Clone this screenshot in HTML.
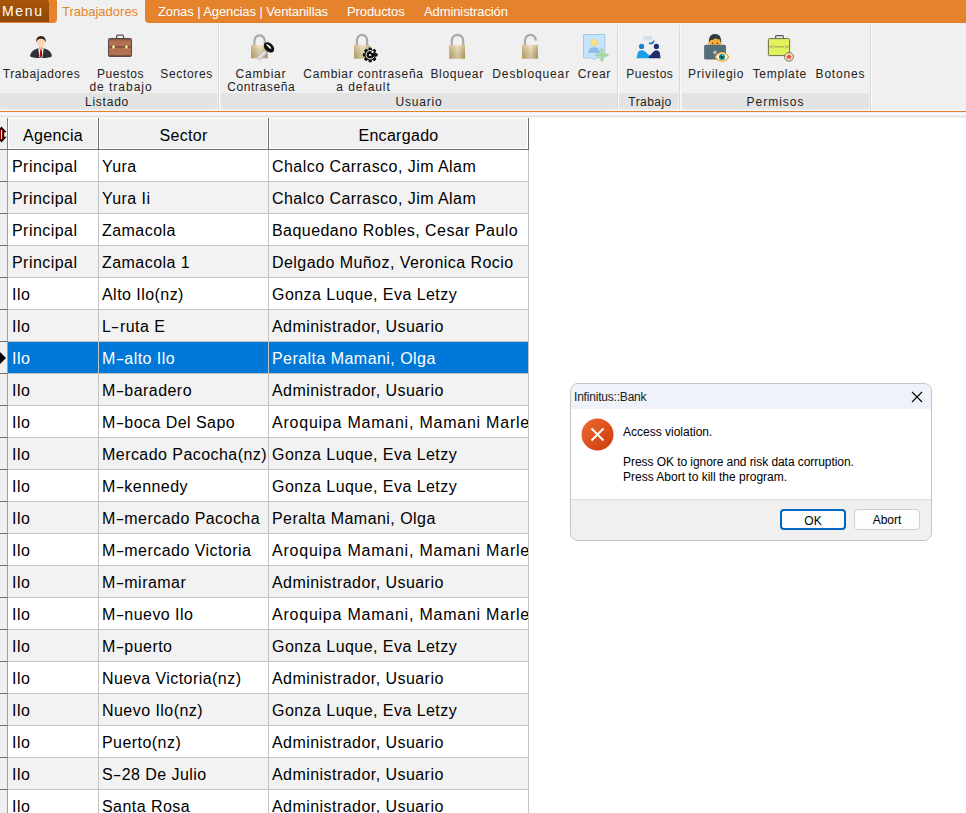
<!DOCTYPE html><html><head><meta charset="utf-8"><style>*{margin:0;padding:0;box-sizing:border-box}
html,body{width:966px;height:813px;overflow:hidden;background:#fff;font-family:"Liberation Sans",sans-serif;position:relative}
.topbar{position:absolute;top:0;height:23px;background:#e5832d}
.ribbon{position:absolute;left:0;top:22px;width:966px;height:89px;background:#f0f0f0}
.menu{position:absolute;left:0;top:0;width:49px;height:22px;background:linear-gradient(#a9560b,#8f4604);color:#fff;font-size:14px;line-height:22px;padding-left:2px;letter-spacing:1.7px;border-top-right-radius:3px}
.notch{position:absolute;top:22px;width:4px;height:4px;background:#e5832d}
.tab{position:absolute;top:0;height:23px;color:#fff;font-size:13px;line-height:23px;letter-spacing:-0.1px;white-space:nowrap}
.tab.act{background:#f0f0f0;color:#e5832d;border-radius:4px 4px 0 0;letter-spacing:0;height:24px}
.orline{position:absolute;left:0;top:111px;width:966px;height:1px;background:#e5832d}
.below{position:absolute;left:0;top:109px;width:966px;height:9px;background:linear-gradient(#eef3fa 0,#eef3fa 2px,transparent 2px,transparent 3px,#eef3fa 3px,#eef3fa 5px,#fff 5px,#fff 6px,#e8e8e8 6px,#e8e8e8 8px,#f0f0f0 8px)}
.glabel{position:absolute;top:93px;height:16px;background:#e3e3e3;color:#222;font-size:12px;line-height:18px;text-align:center;letter-spacing:0.45px;border-radius:0 0 3px 3px}
.sep{position:absolute;top:25px;width:1px;height:85px;background:#d9d9d9;box-shadow:1px 0 0 #fafafa}
.bt{position:absolute;font-size:12px;color:#222;line-height:13px;white-space:nowrap;letter-spacing:0.45px}
.grid{position:absolute;left:0;top:118px;width:529px;height:695px;background:#fff}
.hind{position:absolute;left:0;top:0;width:8px;height:32px;background:#f0f0f0;border-right:1px solid #808080;border-bottom:1px solid #6e6e6e;box-shadow:inset 0 1px 0 #fff}
.rsz{position:absolute;left:0;top:0}
.hc{position:absolute;top:0;height:32px;background:#f0f0f0;border-right:1px solid #6e6e6e;border-bottom:1px solid #6e6e6e;box-shadow:inset 1px 1px 0 #fff,inset -1px -1px 0 #fff;font-size:16px;line-height:36px;text-align:center;color:#000;letter-spacing:0.3px}
.c1{left:8px;width:91px}
.c2{left:99px;width:170px}
.c3{left:269px;width:260px}
.row{position:absolute;left:0;width:529px;height:32px;background:#fff}
.row.alt{background:#f2f2f2}
.ind{position:absolute;left:0;top:0;width:8px;height:32px;background:#f0f0f0;border-right:1px solid #a0a0a0;border-bottom:1px solid #6e6e6e}
.cell{position:absolute;top:0;height:32px;border-right:1px solid #c3c3c3;border-bottom:1px solid #c3c3c3;font-size:16px;line-height:33px;padding-left:3px;white-space:nowrap;overflow:hidden;color:#000;letter-spacing:0.45px}
.row .c1{padding-left:4px}
.row.sel .cell{background:#0078d7;color:#fff;border-bottom-color:#c3c3c3}
.arr{position:absolute;left:0;top:10px;width:0;height:0;border-top:6px solid transparent;border-bottom:6px solid transparent;border-left:6px solid #000}
.dlg{position:absolute;left:570px;top:383px;width:362px;height:158px;border:1px solid #c4c4c4;border-radius:8px;background:#fff;overflow:hidden;font-size:12px;color:#000;box-shadow:0 0 1px rgba(0,0,0,0.05)}
.dlg .title{position:absolute;left:0;top:0;width:100%;height:25px;background:#eff2f8;font-size:12px;line-height:26px;padding-left:3px;letter-spacing:-0.2px;color:#1a1a1a}
.dlg .msg{position:absolute;left:52px;font-size:12px;line-height:15px;letter-spacing:0px;white-space:nowrap;color:#000}
.dlg .foot{position:absolute;left:0;top:115px;width:100%;height:43px;background:#f0f0f0;border-top:1px solid #dfdfdf}
.dbtn{position:absolute;top:125px;height:21px;width:66px;border-radius:4px;background:#fdfdfd;font-size:12px;line-height:21px;text-align:center;color:#000}

.hy{display:inline-block;transform:scaleX(1.6);padding:0 1.4px}
</style></head><body>
<div class="ribbon"></div>
<div class="topbar" style="left:0;width:57px;border-bottom-right-radius:4px"></div><div class="topbar" style="left:145px;width:821px;border-bottom-left-radius:4px"></div>
<div class="menu">Menu</div>
<div class="tab act" style="left:57px;width:88px;padding-left:5px">Trabajadores</div>
<div class="tab" style="left:158px">Zonas | Agencias | Ventanillas</div>
<div class="tab" style="left:347px">Productos</div>
<div class="tab" style="left:424px">Administración</div>
<div class="below"></div>
<div class="orline"></div>
<div class="glabel" style="left:0;width:217px;padding-right:3px;letter-spacing:0.78px">Listado</div>
<div class="glabel" style="left:221px;width:396px;letter-spacing:0.8px">Usuario</div>
<div class="glabel" style="left:618px;width:60px;padding-left:4px">Trabajo</div>
<div class="glabel" style="left:682px;width:187px;letter-spacing:1px">Permisos</div>
<div class="sep" style="left:218px"></div>
<div class="sep" style="left:617px"></div>
<div class="sep" style="left:679px"></div>
<div class="sep" style="left:870px"></div>
<div class="bt" style="left:2.7px;top:68px;letter-spacing:0.62px">Trabajadores</div>
<div class="bt" style="left:97.0px;top:68px;letter-spacing:0.52px">Puestos</div>
<div class="bt" style="left:89.4px;top:81px;letter-spacing:0.99px">de trabajo</div>
<div class="bt" style="left:160.3px;top:68px;letter-spacing:0.65px">Sectores</div>
<div class="bt" style="left:235.6px;top:68px;letter-spacing:0.77px">Cambiar</div>
<div class="bt" style="left:227.2px;top:81px;letter-spacing:0.61px">Contraseña</div>
<div class="bt" style="left:303.3px;top:68px;letter-spacing:0.68px">Cambiar contraseña</div>
<div class="bt" style="left:336.3px;top:81px;letter-spacing:0.93px">a default</div>
<div class="bt" style="left:430.4px;top:68px;letter-spacing:0.68px">Bloquear</div>
<div class="bt" style="left:492.3px;top:68px;letter-spacing:0.88px">Desbloquear</div>
<div class="bt" style="left:577.8px;top:68px;letter-spacing:0.63px">Crear</div>
<div class="bt" style="left:626.3px;top:68px;letter-spacing:0.53px">Puestos</div>
<div class="bt" style="left:688.0px;top:68px;letter-spacing:0.75px">Privilegio</div>
<div class="bt" style="left:752.7px;top:68px;letter-spacing:0.68px">Template</div>
<div class="bt" style="left:815.6px;top:68px;letter-spacing:0.80px">Botones</div>
<svg style="position:absolute;left:0;top:0" width="966" height="112" viewBox="0 0 966 112">
<defs>
<linearGradient id="gold" x1="0" y1="0" x2="1" y2="0"><stop offset="0" stop-color="#c8ad72"/><stop offset="0.55" stop-color="#f1e2b5"/><stop offset="1" stop-color="#bfa266"/></linearGradient>
<linearGradient id="goldv" x1="0" y1="0" x2="0" y2="1"><stop offset="0" stop-color="#fff" stop-opacity="0.25"/><stop offset="1" stop-color="#000" stop-opacity="0.12"/></linearGradient>
</defs>
<!-- person -->
<path d="M30 56 Q30.5 50.5 37.5 48.5 L44.5 48.5 Q51.5 50.5 52 56 Q51 58 41 58 Q31 58 30 56 Z" fill="#2e3137"/>
<path d="M38.3 48.5 L43.7 48.5 L42.6 57.5 L39.4 57.5 Z" fill="#eef2f2"/>
<path d="M40.3 49.2 L41.7 49.2 L42.3 56 L41 57.6 L39.7 56 Z" fill="#c4000f"/>
<path d="M38.8 46 L43.2 46 L43 48.8 L41 50 L39 48.8 Z" fill="#e3b48e"/>
<ellipse cx="41" cy="42.3" rx="4.1" ry="5.3" fill="#f7d6b8"/>
<path d="M36.4 42.5 Q35.6 36 41 36 Q46.4 36 45.6 42.5 Q45 39 41 38.8 Q37 39 36.4 42.5 Z" fill="#3b2314"/>
<!-- briefcase -->
<path d="M116.6 38.5 V36.2 Q116.6 35.1 117.7 35.1 H122.4 Q123.5 35.1 123.5 36.2 V38.5" fill="none" stroke="#555" stroke-width="1.3"/>
<rect x="108.5" y="38.5" width="23" height="18" rx="1" fill="#b27050" stroke="#5b4646" stroke-width="1"/>
<rect x="109" y="39" width="22" height="1.5" fill="#8a5a44"/>
<rect x="109" y="46.2" width="22" height="1.6" fill="#7d5040"/>
<rect x="109" y="55" width="22" height="1.2" fill="#7d5040"/>
<ellipse cx="113.5" cy="47" rx="1.3" ry="1.8" fill="#f4f0a0"/>
<ellipse cx="126.4" cy="47" rx="1.3" ry="1.8" fill="#f4f0a0"/>
<!-- lock + key -->
<path d="M254.4 45.5 V41 A5.2 5.6 0 0 1 264.8 41 V45.5" fill="none" stroke="#a9a9a9" stroke-width="2.2"/>
<rect x="251" y="45" width="16.6" height="13.3" fill="url(#gold)"/>
<rect x="251" y="45" width="16.6" height="13.3" fill="url(#goldv)"/>
<path d="M265.8 51.2 L258 59.2" stroke="#bdbdbd" stroke-width="4.6"/>
<path d="M265 52 L258.4 58.6" stroke="#e4e4e4" stroke-width="2.6"/>
<ellipse cx="269" cy="47.4" rx="6" ry="4.2" transform="rotate(45 269 47.4)" fill="#111"/>
<ellipse cx="268.8" cy="46.4" rx="3.4" ry="0.8" transform="rotate(45 268.8 46.4)" fill="#fff"/>
<!-- lock + gear -->
<path d="M356.9 45.5 V40.5 A5.1 5.6 0 0 1 367.1 40.5 V45.5" fill="none" stroke="#a9a9a9" stroke-width="2.2"/>
<rect x="354" y="45" width="16" height="13.8" fill="url(#gold)"/>
<rect x="354" y="45" width="16" height="13.8" fill="url(#goldv)"/>
<g transform="translate(370.2 54.9)">
<circle r="5.7" fill="#111"/>
<g fill="#111"><rect x="-1.6" y="-7.4" width="3.2" height="3.4" rx="0.9"/><rect x="-1.6" y="-7.4" width="3.2" height="3.4" rx="0.9" transform="rotate(45)"/><rect x="-1.6" y="-7.4" width="3.2" height="3.4" rx="0.9" transform="rotate(90)"/><rect x="-1.6" y="-7.4" width="3.2" height="3.4" rx="0.9" transform="rotate(135)"/><rect x="-1.6" y="-7.4" width="3.2" height="3.4" rx="0.9" transform="rotate(180)"/><rect x="-1.6" y="-7.4" width="3.2" height="3.4" rx="0.9" transform="rotate(225)"/><rect x="-1.6" y="-7.4" width="3.2" height="3.4" rx="0.9" transform="rotate(270)"/><rect x="-1.6" y="-7.4" width="3.2" height="3.4" rx="0.9" transform="rotate(315)"/></g>
<path d="M0.8 -4.2 A4.2 4.2 0 1 0 3.9 1.8" fill="none" stroke="#fff" stroke-width="1"/>
<path d="M1.2 -4.8 L4.3 -3 L1.5 -1.7 Z" fill="#fff"/>
<rect x="-1.2" y="-0.6" width="2.2" height="1.6" fill="#fff"/>
</g>
<!-- lock -->
<path d="M451.8 45.5 V40.5 A5.7 5.6 0 0 1 463.2 40.5 V45.5" fill="none" stroke="#a9a9a9" stroke-width="2.2"/>
<rect x="449.2" y="45" width="15.8" height="13.8" fill="url(#gold)"/>
<rect x="449.2" y="45" width="15.8" height="13.8" fill="url(#goldv)"/>
<!-- unlock -->
<path d="M525 45.5 V40.5 A5.4 5.6 0 0 1 535.8 40.5 V40" fill="none" stroke="#a9a9a9" stroke-width="2.2"/>
<rect x="522" y="45" width="16" height="13.8" fill="url(#gold)"/>
<rect x="522" y="45" width="16" height="13.8" fill="url(#goldv)"/>
<!-- crear -->
<path d="M583.5 34.5 H604.8 V57.8 H596 L594 60 L592 57.8 H583.5 Z" fill="#c6e5fb" stroke="#9fc9f0" stroke-width="1"/>
<path d="M588.2 53 Q588.2 47.2 594 47.2 Q599.8 47.2 599.8 53 Z" fill="#8fbde9"/>
<circle cx="594" cy="42.6" r="3.3" fill="#fde48b" stroke="#e7c86a" stroke-width="0.6"/>
<rect x="595.3" y="53.4" width="13.3" height="3.1" rx="1.2" fill="#a7d7a1"/>
<rect x="600.4" y="48.2" width="3.1" height="13.4" rx="1.2" fill="#a7d7a1"/>
<!-- puestos -->
<rect x="643" y="35.8" width="9.6" height="4.6" rx="1" fill="#dce6ee"/>
<path d="M644.8 38.2 h1.2 M647.3 38.2 h1.2 M649.8 38.2 h1.2" stroke="#9fb8d0" stroke-width="0.8"/>
<path d="M648.5 42.5 L651.5 42.5 L654 40.3 L654.8 41 L653 44 L649.5 44.5 Z" fill="#1976d2"/>
<circle cx="641.6" cy="46.4" r="2.6" fill="#1a7fd0"/>
<path d="M636.5 58.2 L637.8 52.5 Q638.6 50.2 641.6 50.2 Q644.5 50.2 645.6 52 L650.5 56.2 L649.5 58.2 Z" fill="#1aa0ea"/>
<circle cx="656.4" cy="46.4" r="2.6" fill="#1f2d6b"/>
<path d="M648.5 57 L653 52.2 Q654.2 50.2 656.4 50.2 Q659.2 50.2 659.8 52.8 L660.6 58.2 L649.5 58.2 Z" fill="#1f2d6b"/>
<!-- privilegio -->
<path d="M708.8 42.2 Q708.6 34 715 34 Q721.4 34 721.2 42.2 Z" fill="#2f3a40"/>
<path d="M709.8 45.5 V40.5 Q713 40.2 715.5 38.2 Q718.5 39.8 720.2 39.6 V45.5 Z" fill="#f8ad3b"/>
<rect x="708" y="42.2" width="14" height="2" rx="1" fill="#f8ad3b"/>
<circle cx="712.6" cy="43.3" r="0.7" fill="#4e342e"/>
<circle cx="717.4" cy="43.3" r="0.7" fill="#4e342e"/>
<rect x="704.1" y="44.8" width="21.9" height="14.8" rx="1.5" fill="#546e7a"/>
<circle cx="715" cy="52.4" r="1.8" fill="#b0bec5"/>
<path d="M715.4 56.9 Q718 52.6 722 52.6 Q726 52.6 728.7 56.9 Q726 61.2 722 61.2 Q718 61.2 715.4 56.9 Z" fill="#fff" stroke="#f8a535" stroke-width="1.3"/>
<circle cx="722" cy="56.9" r="3" fill="#00897b"/>
<circle cx="722" cy="56.9" r="1.2" fill="#212121"/>
<circle cx="722.6" cy="55.6" r="0.6" fill="#e0f2f1"/>
<!-- template -->
<path d="M775.6 38.6 V36.6 Q775.6 35.7 776.5 35.7 H782.4 Q783.3 35.7 783.3 36.6 V38.6" fill="none" stroke="#5b5b5b" stroke-width="1.2"/>
<rect x="768.4" y="38.6" width="21.2" height="17" rx="1" fill="#e1f25a" stroke="#6d6d50" stroke-width="1"/>
<rect x="769" y="46.2" width="20" height="1.2" fill="#a9b33c"/>
<ellipse cx="773.2" cy="46.8" rx="1.1" ry="1.6" fill="#f3f3b5" stroke="#9a9a60" stroke-width="0.5"/>
<ellipse cx="784.8" cy="46.8" rx="1.1" ry="1.6" fill="#f3f3b5" stroke="#9a9a60" stroke-width="0.5"/>
<circle cx="789" cy="56.8" r="4.4" fill="#f6e8a6" stroke="#575757" stroke-width="0.8"/>
<path d="M789 53.6 L790 55.8 L792.2 55.9 L790.5 57.3 L791.1 59.6 L789 58.3 L786.9 59.6 L787.5 57.3 L785.8 55.9 L788 55.8 Z" fill="#e3435f"/>
</svg>

<div class="grid">
<div class="hind"></div><svg style="position:absolute;left:0;top:0" width="8" height="32" viewBox="0 118 8 32"><path d="M1.5 127.3 L5.4 131.6 L3.6 131.6 L3.6 137.4 L5.4 137.4 L1.5 141.7 L-2.4 137.4 L-0.6 137.4 L-0.6 131.6 L-2.4 131.6 Z" fill="#800000" stroke="#000" stroke-width="1.1"/><rect x="1" y="130" width="1.1" height="9" fill="#ffff00"/></svg>
<div class="hc c1">Agencia</div><div class="hc c2">Sector</div><div class="hc c3">Encargado</div>
<div class="row" style="top:32px"><div class="ind"></div><div class="cell c1">Principal</div><div class="cell c2">Yura</div><div class="cell c3">Chalco Carrasco, Jim Alam</div></div>
<div class="row alt" style="top:64px"><div class="ind"></div><div class="cell c1">Principal</div><div class="cell c2">Yura Ii</div><div class="cell c3">Chalco Carrasco, Jim Alam</div></div>
<div class="row" style="top:96px"><div class="ind"></div><div class="cell c1">Principal</div><div class="cell c2">Zamacola</div><div class="cell c3">Baquedano Robles, Cesar Paulo</div></div>
<div class="row alt" style="top:128px"><div class="ind"></div><div class="cell c1">Principal</div><div class="cell c2">Zamacola 1</div><div class="cell c3">Delgado Muñoz, Veronica Rocio</div></div>
<div class="row" style="top:160px"><div class="ind"></div><div class="cell c1">Ilo</div><div class="cell c2">Alto Ilo(nz)</div><div class="cell c3">Gonza Luque, Eva Letzy</div></div>
<div class="row alt" style="top:192px"><div class="ind"></div><div class="cell c1">Ilo</div><div class="cell c2">L<span class=hy>-</span>ruta E</div><div class="cell c3">Administrador, Usuario</div></div>
<div class="row sel" style="top:224px"><div class="ind"><i class=arr></i></div><div class="cell c1">Ilo</div><div class="cell c2">M<span class=hy>-</span>alto Ilo</div><div class="cell c3">Peralta Mamani, Olga</div></div>
<div class="row alt" style="top:256px"><div class="ind"></div><div class="cell c1">Ilo</div><div class="cell c2">M<span class=hy>-</span>baradero</div><div class="cell c3">Administrador, Usuario</div></div>
<div class="row" style="top:288px"><div class="ind"></div><div class="cell c1">Ilo</div><div class="cell c2">M<span class=hy>-</span>boca Del Sapo</div><div class="cell c3" style=letter-spacing:0.77px>Aroquipa Mamani, Mamani Marleni</div></div>
<div class="row alt" style="top:320px"><div class="ind"></div><div class="cell c1">Ilo</div><div class="cell c2">Mercado Pacocha(nz)</div><div class="cell c3">Gonza Luque, Eva Letzy</div></div>
<div class="row" style="top:352px"><div class="ind"></div><div class="cell c1">Ilo</div><div class="cell c2">M<span class=hy>-</span>kennedy</div><div class="cell c3">Gonza Luque, Eva Letzy</div></div>
<div class="row alt" style="top:384px"><div class="ind"></div><div class="cell c1">Ilo</div><div class="cell c2">M<span class=hy>-</span>mercado Pacocha</div><div class="cell c3">Peralta Mamani, Olga</div></div>
<div class="row" style="top:416px"><div class="ind"></div><div class="cell c1">Ilo</div><div class="cell c2">M<span class=hy>-</span>mercado Victoria</div><div class="cell c3" style=letter-spacing:0.77px>Aroquipa Mamani, Mamani Marleni</div></div>
<div class="row alt" style="top:448px"><div class="ind"></div><div class="cell c1">Ilo</div><div class="cell c2">M<span class=hy>-</span>miramar</div><div class="cell c3">Administrador, Usuario</div></div>
<div class="row" style="top:480px"><div class="ind"></div><div class="cell c1">Ilo</div><div class="cell c2">M<span class=hy>-</span>nuevo Ilo</div><div class="cell c3" style=letter-spacing:0.77px>Aroquipa Mamani, Mamani Marleni</div></div>
<div class="row alt" style="top:512px"><div class="ind"></div><div class="cell c1">Ilo</div><div class="cell c2">M<span class=hy>-</span>puerto</div><div class="cell c3">Gonza Luque, Eva Letzy</div></div>
<div class="row" style="top:544px"><div class="ind"></div><div class="cell c1">Ilo</div><div class="cell c2">Nueva Victoria(nz)</div><div class="cell c3">Administrador, Usuario</div></div>
<div class="row alt" style="top:576px"><div class="ind"></div><div class="cell c1">Ilo</div><div class="cell c2">Nuevo Ilo(nz)</div><div class="cell c3">Gonza Luque, Eva Letzy</div></div>
<div class="row" style="top:608px"><div class="ind"></div><div class="cell c1">Ilo</div><div class="cell c2">Puerto(nz)</div><div class="cell c3">Administrador, Usuario</div></div>
<div class="row alt" style="top:640px"><div class="ind"></div><div class="cell c1">Ilo</div><div class="cell c2">S<span class=hy>-</span>28 De Julio</div><div class="cell c3">Administrador, Usuario</div></div>
<div class="row" style="top:672px"><div class="ind"></div><div class="cell c1">Ilo</div><div class="cell c2">Santa Rosa</div><div class="cell c3">Administrador, Usuario</div></div>
</div>
<div class="dlg">
<div class="title">Infinitus::Bank</div>
<svg style="position:absolute;left:340px;top:7px" width="12" height="12" viewBox="0 0 12 12"><path d="M1 1 L11 11 M11 1 L1 11" stroke="#000" stroke-width="1.1"/></svg>
<svg style="position:absolute;left:10px;top:34px" width="33" height="33" viewBox="0 0 33 33"><defs><linearGradient id="eg" x1="0" y1="0" x2="1" y2="1"><stop offset="0" stop-color="#ec6a34"/><stop offset="1" stop-color="#cc3a08"/></linearGradient></defs><circle cx="16.5" cy="16.5" r="16" fill="url(#eg)"/><path d="M10.5 10.5 L22.5 22.5 M22.5 10.5 L10.5 22.5" stroke="#fff" stroke-width="2"/></svg>
<div class="msg" style="top:41px">Access violation.</div>
<div class="msg" style="top:71px;letter-spacing:-0.06px">Press OK to ignore and risk data corruption.</div>
<div class="msg" style="top:86px">Press Abort to kill the program.</div>
<div class="foot"></div>
<div class="dbtn" style="left:209px;border:2px solid #0067c0">OK</div>
<div class="dbtn" style="left:283px;border:1px solid #cfcfcf">Abort</div>
</div>

</body></html>
